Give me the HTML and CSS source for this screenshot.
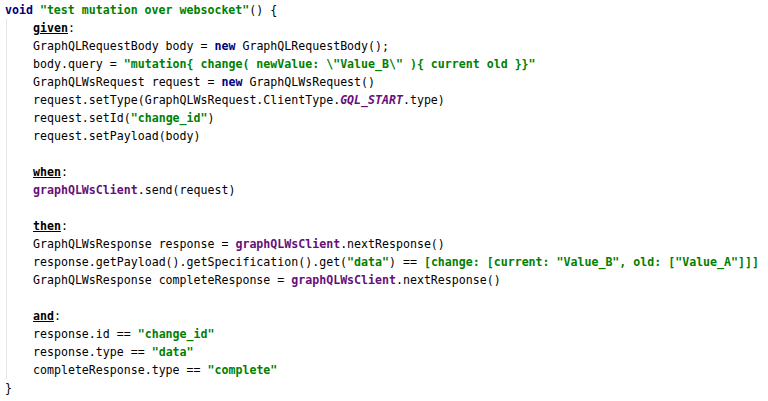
FILE: index.html
```html
<!DOCTYPE html>
<html>
<head>
<meta charset="utf-8">
<link rel="stylesheet" href="styles.css">
</head>
<body>
<div class="code">
<div class="line"><span class="kw">void</span> <span class="str">"test mutation over websocket"</span>() {</div>
<div class="block">
<div class="line"><span class="label">given</span>:</div>
<div class="line">GraphQLRequestBody body = <span class="kw">new</span> GraphQLRequestBody();</div>
<div class="line">body.query = <span class="str">"mutation{ change( newValue: \"Value_B\" ){ current old }}"</span></div>
<div class="line">GraphQLWsRequest request = <span class="kw">new</span> GraphQLWsRequest()</div>
<div class="line">request.setType(GraphQLWsRequest.ClientType.<span class="const">GQL_START</span>.type)</div>
<div class="line">request.setId(<span class="str">"change_id"</span>)</div>
<div class="line">request.setPayload(body)</div>
<div class="line"> </div>
<div class="line"><span class="label">when</span>:</div>
<div class="line"><span class="field">graphQLWsClient</span>.send(request)</div>
<div class="line"> </div>
<div class="line"><span class="label">then</span>:</div>
<div class="line">GraphQLWsResponse response = <span class="field">graphQLWsClient</span>.nextResponse()</div>
<div class="line">response.getPayload().getSpecification().get(<span class="str">"data"</span>) == <span class="str">[change: [current: "Value_B", old: ["Value_A"]]]</span></div>
<div class="line">GraphQLWsResponse completeResponse = <span class="field">graphQLWsClient</span>.nextResponse()</div>
<div class="line"> </div>
<div class="line"><span class="label">and</span>:</div>
<div class="line">response.id == <span class="str">"change_id"</span></div>
<div class="line">response.type == <span class="str">"data"</span></div>
<div class="line">completeResponse.type == <span class="str">"complete"</span></div>
</div>
<div class="line">}</div>
</div>
</body>
</html>
```
FILE: styles.css
```css
html, body {
  margin: 0;
  padding: 0;
  background: #ffffff;
}
.code {
  padding: 1px 0 0 5px;
  font-family: "DejaVu Sans Mono", monospace;
  font-size: 11.6px;
  line-height: 18px;
  color: #000000;
}
.line {
  height: 18px;
  white-space: pre;
}
.block {
  margin-left: 1px;
  border-left: 1px solid #e4e4e4;
  padding-left: 26px;
}
.kw {
  color: #000080;
  font-weight: bold;
}
.str {
  color: #008000;
  font-weight: bold;
}
.field {
  color: #660e7a;
  font-weight: bold;
}
.const {
  color: #660e7a;
  font-weight: bold;
  font-style: italic;
}
.label {
  font-weight: bold;
  text-decoration: underline;
}
```
